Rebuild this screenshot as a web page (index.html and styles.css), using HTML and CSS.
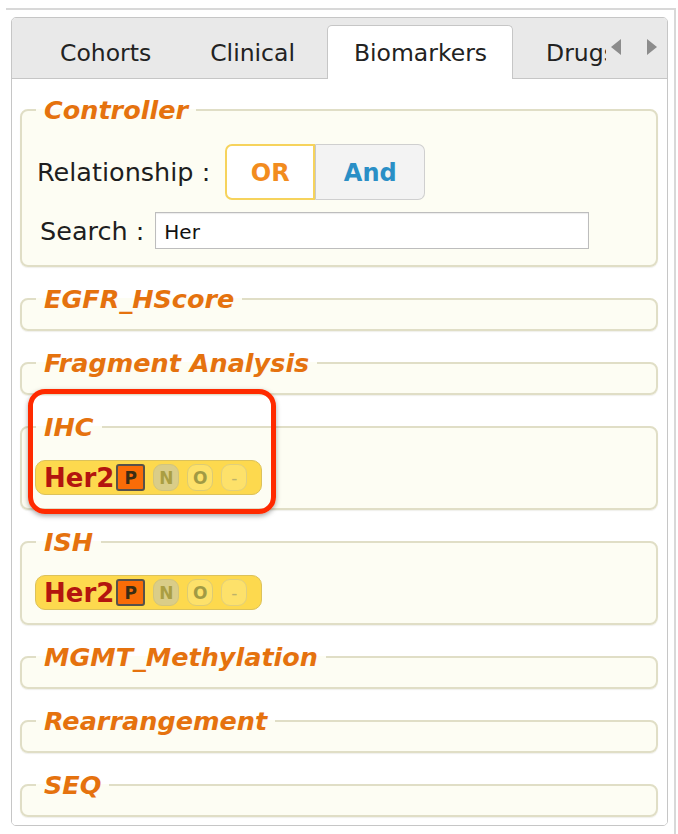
FILE: index.html
```html
<!DOCTYPE html>
<html lang="en">
<head>
<meta charset="utf-8">
<title>Biomarkers</title>
<link rel="stylesheet" href="styles.css">
</head>
<body>
<div class="frame">
  <div class="tabs">
    <div class="tab-header">
      <div class="tab-strip">
        <div class="tab">Cohorts</div>
        <div class="tab">Clinical</div>
        <div class="tab active">Biomarkers</div>
        <div class="tab">Drugs</div>
      </div>
      <div class="tab-scroll">
        <svg class="arrow" viewBox="0 0 10 16" width="10" height="16"><polygon points="10,0 10,16 0,8" /></svg>
        <svg class="arrow" viewBox="0 0 10 16" width="10" height="16"><polygon points="0,0 0,16 10,8" /></svg>
      </div>
    </div>

    <div class="tab-body">
      <fieldset class="group">
        <legend>Controller</legend>
        <div class="ctrl-row rel-row">
          <span class="ctrl-label">Relationship :</span>
          <div class="toggle">
            <span class="seg seg-or">OR</span>
            <span class="seg seg-and">And</span>
          </div>
        </div>
        <div class="ctrl-row search-row">
          <span class="ctrl-label">Search :</span>
          <input class="search-input" type="text" value="Her">
        </div>
      </fieldset>

      <fieldset class="group empty"><legend>EGFR_HScore</legend></fieldset>
      <fieldset class="group empty"><legend>Fragment Analysis</legend></fieldset>

      <fieldset class="group has-chip">
        <legend>IHC</legend>
        <div class="chip">
          <span class="chip-name">Her2</span>
          <span class="state state-p">P</span>
          <span class="state state-n">N</span>
          <span class="state state-o">O</span>
          <span class="state state-x">-</span>
        </div>
        <div class="highlight"></div>
      </fieldset>

      <fieldset class="group">
        <legend>ISH</legend>
        <div class="chip">
          <span class="chip-name">Her2</span>
          <span class="state state-p">P</span>
          <span class="state state-n">N</span>
          <span class="state state-o">O</span>
          <span class="state state-x">-</span>
        </div>
      </fieldset>

      <fieldset class="group empty"><legend>MGMT_Methylation</legend></fieldset>
      <fieldset class="group empty"><legend>Rearrangement</legend></fieldset>
      <fieldset class="group empty"><legend>SEQ</legend></fieldset>
    </div>
  </div>
</div>
</body>
</html>
```

FILE: styles.css
```css
html, body {
  margin: 0;
  padding: 0;
  background: #ffffff;
}

body {
  font-family: "DejaVu Sans", Verdana, sans-serif;
  color: #222;
}

/* outer splitter pane */
.frame {
  margin: 8px 0 0 6px;
  width: 670px;
  height: 826px;
  border-top: 2px solid #d8d8d8;
  border-right: 2px solid #d8d8d8;
  box-sizing: border-box;
  padding: 7px 6px 0 5px;
}

/* tab widget */
.tabs {
  height: 809px;
  border: 1px solid #c6c6c6;
  border-radius: 5px;
  box-sizing: border-box;
  overflow: hidden;
  display: flex;
  flex-direction: column;
}

.tab-header {
  height: 61px;
  flex: none;
  background: #e9e9e9;
  border-bottom: 1px solid #c6c6c6;
  box-sizing: border-box;
  display: flex;
  align-items: flex-end;
}

.tab-strip {
  flex: 1;
  display: flex;
  align-items: flex-end;
  gap: 6px;
  padding-left: 21px;
  overflow: hidden;
  margin-bottom: -1px;
  height: 61px;
}

.tab {
  flex: none;
  height: 53px;
  box-sizing: border-box;
  padding: 0 25px 0 26px;
  display: flex;
  align-items: center;
  font-size: 23.5px;
  color: #222;
  border: 1px solid transparent;
  border-bottom: none;
  border-radius: 5px 5px 0 0;
}

.tab.active {
  background: #fff;
  border-color: #c6c6c6;
  height: 54px;
}

.tab-scroll {
  flex: none;
  width: 61px;
  height: 60px;
  display: flex;
  align-items: center;
  justify-content: space-between;
  box-sizing: border-box;
  padding: 0 10px 0 5px;
  background: #e9e9e9;
}

.arrow {
  fill: #8c8c8c;
  margin-top: -2px;
}

.tab-body {
  flex: 1;
  background: #fff;
  padding: 18px 9px 0 8px;
}

/* collapsible groups */
.group {
  position: relative;
  margin: 0 0 19px;
  padding: 4px 14px 13px;
  border: 2px solid #e0dec6;
  border-radius: 8px;
  background: #fdfdf3;
  box-shadow: 0 1px 1px rgba(120, 120, 90, 0.12);
  min-width: 0;
}

.group legend {
  padding: 0 8px 0 8px;
  font-weight: bold;
  font-style: italic;
  font-size: 25.5px;
  line-height: 26px;
  color: #e5720e;
}

.ctrl-row {
  display: flex;
  align-items: center;
}

.ctrl-label {
  font-size: 25.5px;
  color: #1e1e1e;
}

.rel-row {
  margin-top: 17px;
  margin-left: 1px;
}

.rel-row .ctrl-label {
  margin-right: 15px;
}

.toggle {
  display: flex;
  height: 56px;
}

.seg {
  display: flex;
  align-items: center;
  justify-content: center;
  font-size: 24px;
  font-weight: bold;
  box-sizing: border-box;
  padding-top: 2px;
}

.seg-or {
  width: 90px;
  background: #fff;
  color: #f28c1e;
  border: 2px solid #f6d35c;
  border-radius: 7px 0 0 7px;
}

.seg-and {
  width: 110px;
  background: #f3f3f3;
  color: #2a8fc6;
  border: 1px solid #cfcfcf;
  border-left: 1px solid #c9c9c9;
  border-radius: 0 7px 7px 0;
}

.search-row {
  margin-top: 12px;
  margin-left: 4px;
  margin-bottom: 3px;
}

.search-row .ctrl-label {
  margin-right: 11px;
}

.search-input {
  width: 434px;
  height: 37px;
  box-sizing: border-box;
  border: 1px solid #bdbdbd;
  box-shadow: inset 0 1px 1px rgba(0, 0, 0, 0.08);
  padding: 2px 8px 0;
  font-family: "DejaVu Sans", Verdana, sans-serif;
  font-size: 20px;
  color: #111;
  background: #fff;
  outline: none;
}

/* biomarker chip */
.chip {
  display: inline-flex;
  align-items: center;
  margin-top: 16px;
  margin-left: -1px;
  height: 35px;
  box-sizing: border-box;
  padding: 0 14px 0 8px;
  background: #fdd94e;
  border: 1px solid #dcc25a;
  border-radius: 10px;
}

.chip-name {
  font-weight: bold;
  font-size: 26px;
  color: #b3150f;
  margin-right: 2px;
}

.state {
  display: flex;
  align-items: center;
  justify-content: center;
  width: 26px;
  height: 27px;
  box-sizing: border-box;
  font-weight: bold;
  font-size: 17px;
  margin-left: 8px;
}

.state-p {
  width: 29px;
  margin-left: 0;
  background: #f96c07;
  border: 2px solid #57514a;
  border-radius: 3px;
  color: #3a2c14;
}

.state-n {
  background: #dacd88;
  border: 1px solid #d1c47c;
  border-radius: 9px;
  color: #aa9e42;
}

.state-o {
  background: #fde16a;
  border: 1px solid #dccb74;
  border-radius: 9px;
  color: #a19a44;
}

.state-x {
  background: #fde16a;
  border: 1px solid #e0cf7c;
  border-radius: 9px;
  color: #bdb36a;
  font-weight: normal;
}

/* callout ring drawn over the IHC group */
.highlight {
  position: absolute;
  left: 6px;
  top: -51px;
  width: 248px;
  height: 125px;
  box-sizing: border-box;
  border: 5px solid #ff2a00;
  border-radius: 17px;
  box-shadow: 0 2px 5px rgba(0, 0, 0, 0.35);
  pointer-events: none;
}
```
